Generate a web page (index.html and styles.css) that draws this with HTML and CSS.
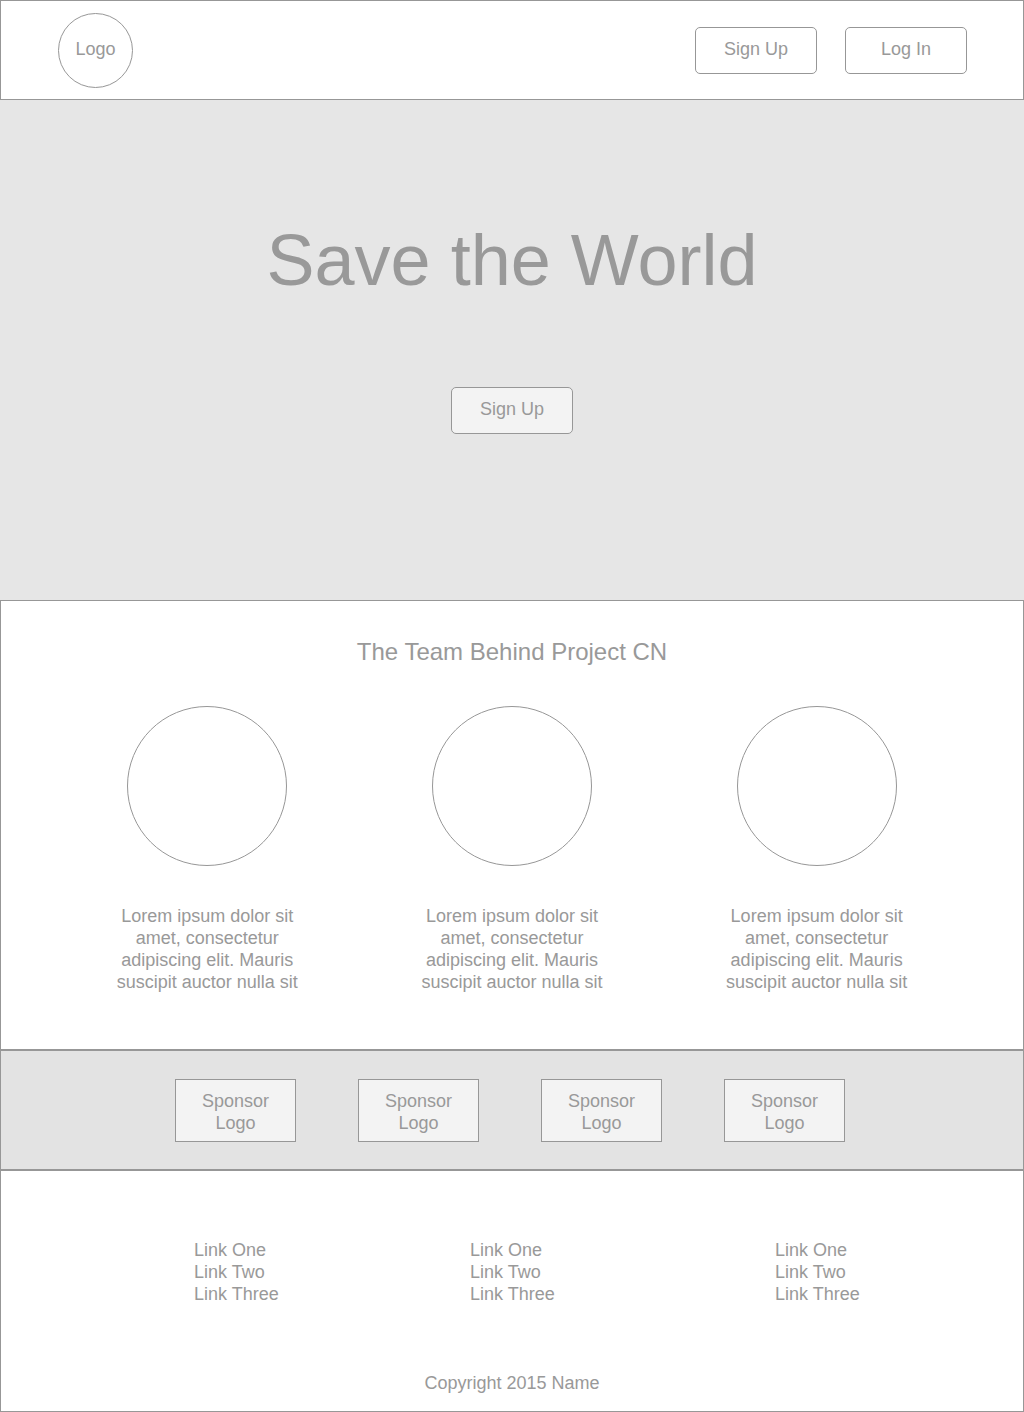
FILE: index.html
```html
<!DOCTYPE html>
<html lang="en">
<head>
<meta charset="utf-8">
<meta name="viewport" content="width=device-width, initial-scale=1">
<title>Save the World</title>
<link rel="stylesheet" href="styles.css">
</head>
<body>
<header class="site-header">
  <a class="logo" href="#">Logo</a>
  <nav class="actions">
    <button class="button" type="button">Sign Up</button>
    <button class="button" type="button">Log In</button>
  </nav>
</header>
<main>
  <section class="hero">
    <h1 class="hero-title">Save the World</h1>
    <button class="button button-filled" type="button">Sign Up</button>
  </section>
  <section class="team">
    <h2 class="team-title">The Team Behind Project CN</h2>
    <div class="members">
      <article class="member">
        <div class="portrait"></div>
        <p class="bio">Lorem ipsum dolor sit amet, consectetur adipiscing elit. Mauris suscipit auctor nulla sit</p>
      </article>
      <article class="member">
        <div class="portrait"></div>
        <p class="bio">Lorem ipsum dolor sit amet, consectetur adipiscing elit. Mauris suscipit auctor nulla sit</p>
      </article>
      <article class="member">
        <div class="portrait"></div>
        <p class="bio">Lorem ipsum dolor sit amet, consectetur adipiscing elit. Mauris suscipit auctor nulla sit</p>
      </article>
    </div>
  </section>
  <section class="sponsors">
    <div class="sponsor">Sponsor Logo</div>
    <div class="sponsor">Sponsor Logo</div>
    <div class="sponsor">Sponsor Logo</div>
    <div class="sponsor">Sponsor Logo</div>
  </section>
</main>
<footer class="site-footer">
  <div class="link-columns">
    <ul class="links">
      <li><a href="#">Link One</a></li>
      <li><a href="#">Link Two</a></li>
      <li><a href="#">Link Three</a></li>
    </ul>
    <ul class="links">
      <li><a href="#">Link One</a></li>
      <li><a href="#">Link Two</a></li>
      <li><a href="#">Link Three</a></li>
    </ul>
    <ul class="links">
      <li><a href="#">Link One</a></li>
      <li><a href="#">Link Two</a></li>
      <li><a href="#">Link Three</a></li>
    </ul>
  </div>
  <p class="copyright">Copyright 2015 Name</p>
</footer>
</body>
</html>
```
FILE: styles.css
```css
* {
  box-sizing: border-box;
}

body {
  margin: 0;
  background: #fff;
  color: #999;
  font: 18px/22px "Liberation Sans", Arial, sans-serif;
}

h1, h2, p, ul {
  margin: 0;
  padding: 0;
  font-weight: normal;
}

a {
  color: inherit;
  text-decoration: none;
}

.site-header {
  display: flex;
  align-items: center;
  justify-content: space-between;
  min-height: 100px;
  padding: 0 56px 0 57px;
  border: 1px solid #979797;
}

.logo {
  display: flex;
  align-items: center;
  justify-content: center;
  width: 75px;
  height: 75px;
  padding-bottom: 2px;
  border: 1px solid #979797;
  border-radius: 50%;
}

.actions {
  display: flex;
  gap: 28px;
}

.button {
  width: 122px;
  height: 47px;
  padding: 0 0 3px;
  border: 1px solid #979797;
  border-radius: 5px;
  background: #fff;
  color: inherit;
  font: inherit;
}

.button-filled {
  background: #f3f3f3;
}

.hero {
  display: flex;
  flex-direction: column;
  align-items: center;
  gap: 84px;
  padding: 117px 24px 166px;
  background: #e6e6e6;
}

.hero-title {
  font-size: 72px;
  line-height: 86px;
  text-align: center;
}

.team {
  padding: 36px 54px 56px;
  border: 1px solid #979797;
}

.team-title {
  font-size: 24px;
  line-height: 29px;
  text-align: center;
}

.members {
  display: grid;
  grid-template-columns: repeat(3, 1fr);
  margin-top: 40px;
}

.member {
  display: flex;
  flex-direction: column;
  align-items: center;
  gap: 39px;
}

.portrait {
  width: 160px;
  height: 160px;
  border: 1px solid #979797;
  border-radius: 50%;
}

.bio {
  max-width: 190px;
  text-align: center;
}

.sponsors {
  display: flex;
  justify-content: center;
  gap: 62px;
  padding: 28px 28px 27px 24px;
  border: 1px solid #979797;
  background: #e3e3e3;
}

.sponsor {
  width: 121px;
  padding: 10px 20px 7px;
  border: 1px solid #979797;
  background: #f3f3f3;
  text-align: center;
}

.site-footer {
  padding: 68px 54px 17px;
  border: 1px solid #979797;
}

.link-columns {
  display: grid;
  grid-template-columns: 276fr 305fr 194fr;
  padding-left: 139px;
}

.links {
  list-style: none;
}

.copyright {
  margin-top: 67px;
  text-align: center;
}
```
